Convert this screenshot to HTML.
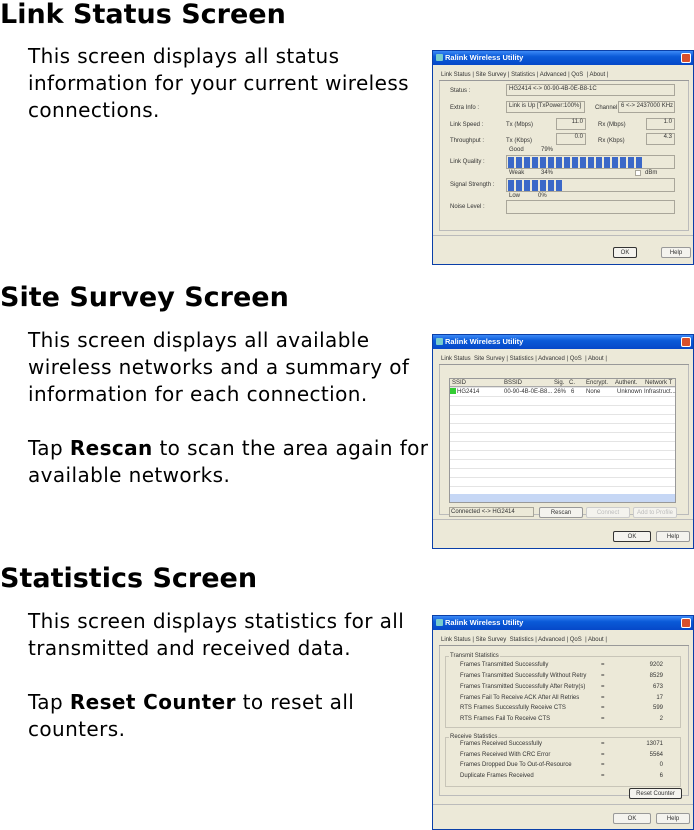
<!DOCTYPE html>
<html><head><meta charset="utf-8"><style>
*{margin:0;padding:0;box-sizing:border-box}
body{width:694px;height:829px;background:#fff;position:relative;overflow:hidden;font-family:"DejaVu Sans",sans-serif;color:#000}
h1{position:absolute;left:0;font-size:27px;font-weight:bold;line-height:30px;white-space:nowrap}
p{position:absolute;left:28px;font-size:20px;line-height:27px;white-space:nowrap;letter-spacing:0.4px}
.w{position:absolute;left:432px;width:262px;height:215px;background:#ece9d8;border:1px solid #0a3fa8;font-family:"Liberation Sans",sans-serif;font-size:6px;color:#333;overflow:hidden}
.t{position:absolute;left:0;top:0;width:100%;height:14px;background:linear-gradient(#3d8af7,#0a5ad8 40%,#0648c8);color:#fff;font-weight:bold;font-size:7.5px;line-height:14px;padding-left:12px}
.t:before{content:"";position:absolute;left:3px;top:3px;width:7px;height:7px;background:#7cc;border-radius:1px}
.x{position:absolute;right:2px;top:2px;width:10px;height:10px;background:#d9502c;border:1px solid #fff;border-radius:2px}
.a{position:absolute;white-space:nowrap}
.f{position:absolute;border:1px solid #a9a69a;background:#ece9d8}
.bt{position:absolute;border:1px solid #333;background:#f4f3ee;border-radius:2px;text-align:center;line-height:10px}
.tabs{position:absolute;left:6px;top:19px;height:11px;width:250px;border-bottom:1px solid #999}
.pane{position:absolute;left:6px;top:30px;width:250px;height:150px;border:1px solid #bbb;border-top:none}
.blk{position:absolute;top:1px;width:6px;height:11px;background:#3b68c8}
.sep{position:absolute;left:0;top:184px;width:100%;border-top:1px solid #bbb}
</style></head><body>
<h1 style="top:0">Link Status Screen</h1>
<p style="top:43px">This screen displays all status<br>information for your current wireless<br>connections.</p>
<h1 style="top:283px">Site Survey Screen</h1>
<p style="top:327px">This screen displays all available<br>wireless networks and a summary of<br>information for each connection.<br><br>Tap <b>Rescan</b> to scan the area again for<br>available networks.</p>
<h1 style="top:564px">Statistics Screen</h1>
<p style="top:608px">This screen displays statistics for all<br>transmitted and received data.<br><br>Tap <b>Reset Counter</b> to reset all<br>counters.</p>

<!-- window 1 -->
<div class="w" style="top:50px">
<div class="t">Ralink Wireless Utility</div><div class="x"></div>
<div class="tabs"></div>
<div class="a" style="left:8px;top:21px">Link Status | Site Survey | Statistics | Advanced | QoS &nbsp;| About |</div>
<div class="pane"></div>
<div class="a" style="left:17px;top:37px">Status :</div><div class="f" style="left:73px;top:33px;width:169px;height:12px;padding:1px 2px">HG2414 &lt;-&gt; 00-90-4B-0E-B8-1C</div>
<div class="a" style="left:17px;top:54px">Extra Info :</div><div class="f" style="left:73px;top:50px;width:79px;height:12px;padding:1px 2px">Link is Up [TxPower:100%]</div>
<div class="a" style="left:162px;top:54px">Channel</div><div class="f" style="left:185px;top:50px;width:57px;height:12px;padding:1px 2px;overflow:hidden;white-space:nowrap">6 &lt;-&gt; 2437000 KHz</div>
<div class="a" style="left:17px;top:71px">Link Speed :</div><div class="a" style="left:73px;top:71px">Tx (Mbps)</div><div class="f" style="left:123px;top:67px;width:30px;height:12px;text-align:right;padding-right:2px">11.0</div>
<div class="a" style="left:165px;top:71px">Rx (Mbps)</div><div class="f" style="left:213px;top:67px;width:29px;height:12px;text-align:right;padding-right:2px">1.0</div>
<div class="a" style="left:17px;top:87px">Throughput :</div><div class="a" style="left:73px;top:87px">Tx (Kbps)</div><div class="f" style="left:123px;top:82px;width:30px;height:12px;text-align:right;padding-right:2px">0.0</div>
<div class="a" style="left:165px;top:87px">Rx (Kbps)</div><div class="f" style="left:213px;top:82px;width:29px;height:12px;text-align:right;padding-right:2px">4.3</div>
<div class="a" style="left:76px;top:96px">Good</div><div class="a" style="left:108px;top:96px">79%</div>
<div class="a" style="left:17px;top:108px">Link Quality :</div>
<div class="f" style="left:73px;top:104px;width:169px;height:14px" id="lq"></div>
<div class="a" style="left:76px;top:119px">Weak</div><div class="a" style="left:108px;top:119px">34%</div>
<div class="f" style="left:202px;top:119px;width:6px;height:6px;background:#fff"></div><div class="a" style="left:212px;top:119px">dBm</div>
<div class="a" style="left:17px;top:131px">Signal Strength :</div>
<div class="f" style="left:73px;top:127px;width:169px;height:14px" id="ss"></div>
<div class="a" style="left:76px;top:142px">Low</div><div class="a" style="left:105px;top:142px">0%</div>
<div class="a" style="left:17px;top:153px">Noise Level :</div>
<div class="f" style="left:73px;top:149px;width:169px;height:14px"></div>
<div class="sep"></div>
<div class="bt" style="left:180px;top:196px;width:24px;height:11px">OK</div>
<div class="bt" style="left:228px;top:196px;width:30px;height:11px;border-color:#999">Help</div>
</div>

<!-- window 2 -->
<div class="w" style="top:334px">
<div class="t">Ralink Wireless Utility</div><div class="x"></div>
<div class="tabs"></div>
<div class="a" style="left:8px;top:21px">Link Status &nbsp;Site Survey | Statistics | Advanced | QoS &nbsp;| About |</div>
<div class="pane"></div>
<div style="position:absolute;left:16px;top:43px;width:227px;height:125px;background:#fff;border:1px solid #999;background-image:repeating-linear-gradient(#fff 0 8px,#e4e4e4 8px 9px)"></div>
<div style="position:absolute;left:17px;top:44px;width:225px;height:8px;background:#ece9d8;border-bottom:1px solid #aaa"></div>
<div class="a" style="left:19px;top:45px">SSID</div><div class="a" style="left:71px;top:45px">BSSID</div><div class="a" style="left:121px;top:45px">Sig.</div><div class="a" style="left:136px;top:45px">C.</div><div class="a" style="left:153px;top:45px">Encrypt.</div><div class="a" style="left:182px;top:45px">Authent.</div><div class="a" style="left:212px;top:45px">Network T</div>
<div style="position:absolute;left:17px;top:53px;width:6px;height:6px;background:#3c3"></div>
<div class="a" style="left:24px;top:54px">HG2414</div><div class="a" style="left:71px;top:54px">00-90-4B-0E-B8...</div><div class="a" style="left:121px;top:54px">26%</div><div class="a" style="left:138px;top:54px">6</div><div class="a" style="left:153px;top:54px">None</div><div class="a" style="left:184px;top:54px">Unknown</div><div class="a" style="left:211px;top:54px">Infrastruct...</div>
<div style="position:absolute;left:17px;top:159px;width:225px;height:8px;background:#c6d7f5"></div>
<div class="f" style="left:16px;top:172px;width:85px;height:10px;padding-left:1px;line-height:8px">Connected &lt;-&gt; HG2414</div>
<div class="bt" style="left:106px;top:172px;width:44px;height:11px;border-color:#999">Rescan</div>
<div class="bt" style="left:153px;top:172px;width:44px;height:11px;border-color:#ccc;color:#bbb">Connect</div>
<div class="bt" style="left:200px;top:172px;width:44px;height:11px;border-color:#ccc;color:#bbb">Add to Profile</div>
<div class="sep"></div>
<div class="bt" style="left:180px;top:196px;width:38px;height:11px">OK</div>
<div class="bt" style="left:223px;top:196px;width:34px;height:11px;border-color:#999">Help</div>
</div>

<!-- window 3 -->
<div class="w" style="top:615px">
<div class="t">Ralink Wireless Utility</div><div class="x"></div>
<div class="tabs"></div>
<div class="a" style="left:8px;top:21px">Link Status | Site Survey &nbsp;Statistics | Advanced | QoS &nbsp;| About |</div>
<div class="pane"></div>
<div class="f" style="left:12px;top:40px;width:236px;height:72px;border-color:#c8c5b8"></div>
<div class="a" style="left:16px;top:37px;background:#ece9d8;padding:0 1px">Transmit Statistics</div>
<div class="f" style="left:12px;top:121px;width:236px;height:50px;border-color:#c8c5b8"></div>
<div class="a" style="left:16px;top:118px;background:#ece9d8;padding:0 1px">Receive Statistics</div>
<div id="rows"></div>
<div class="bt" style="left:196px;top:172px;width:53px;height:11px">Reset Counter</div>
<div class="sep" style="top:188px"></div>
<div class="bt" style="left:180px;top:197px;width:38px;height:11px;border-color:#999">OK</div>
<div class="bt" style="left:223px;top:197px;width:34px;height:11px;border-color:#999">Help</div>
</div>
<script>
var lq=document.getElementById('lq'),h='';for(var i=0;i<17;i++)h+='<div class="blk" style="left:'+(1+i*8)+'px"></div>';lq.innerHTML=h;
var ss=document.getElementById('ss');h='';for(i=0;i<7;i++)h+='<div class="blk" style="left:'+(1+i*8)+'px"></div>';ss.innerHTML=h;
var r=[["Frames Transmitted Successfully","9202",48],["Frames Transmitted Successfully  Without Retry","8529",59],["Frames Transmitted Successfully After Retry(s)","673",70],["Frames Fail To Receive ACK After All Retries","17",81],["RTS Frames Successfully Receive CTS","599",91],["RTS Frames Fail To Receive CTS","2",102],["Frames Received Successfully","13071",127],["Frames Received With CRC Error","5564",138],["Frames Dropped Due To Out-of-Resource","0",148],["Duplicate Frames Received","6",159]];
h='';r.forEach(function(x){h+='<div class="a" style="left:27px;top:'+(x[2]-2)+'px">'+x[0]+'</div><div class="a" style="left:168px;top:'+(x[2]-2)+'px">=</div><div class="a" style="right:30px;top:'+(x[2]-2)+'px">'+x[1]+'</div>'});
document.getElementById('rows').outerHTML=h;
</script>
</body></html>
